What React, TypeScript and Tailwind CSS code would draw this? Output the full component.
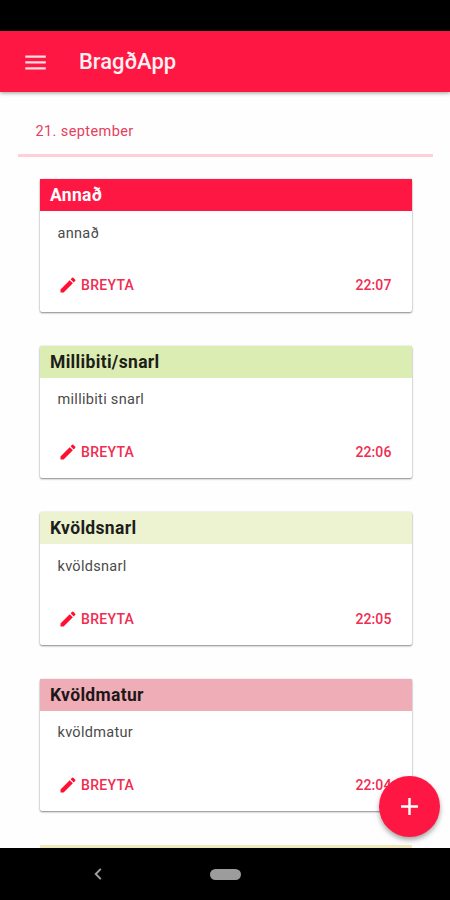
import { MdAdd, MdEdit } from "react-icons/md"

const meals = [
  { title: "Annað", text: "annað", time: "22:07", header: "bg-[#ff1744] text-white" },
  { title: "Millibiti/snarl", text: "millibiti snarl", time: "22:06", header: "bg-[#dcedb3] text-[#1c1e17]" },
  { title: "Kvöldsnarl", text: "kvöldsnarl", time: "22:05", header: "bg-[#edf2d0] text-[#1c1e1a]" },
  { title: "Kvöldmatur", text: "kvöldmatur", time: "22:04", header: "bg-[#efadb7] text-[#1e1718]" },
]

type Meal = (typeof meals)[number]

function MealCard({ meal }: { meal: Meal }) {
  return (
    <div className="h-[132.6px] shrink-0 flex flex-col rounded-[2px] bg-white shadow-[0_1px_2px_rgba(0,0,0,0.45),0_0_2px_rgba(0,0,0,0.12)]">
      <div className={`h-[32px] shrink-0 px-[10px] flex items-center text-[17.5px] font-bold tracking-[0.33px] ${meal.header}`}>
        <p className="leading-[20px]">{meal.title}</p>
      </div>
      <p className="mt-[12.6px] ml-[17.5px] text-[14.5px] leading-[20px] tracking-[0.3px] text-[#4a4a4a]">{meal.text}</p>
      <div className="mt-[31.8px] pl-[17.5px] pr-[20.5px] flex items-center justify-between text-[14px] leading-[20px] font-medium text-[#f02c50]">
        <button className="flex items-center gap-[3.5px] tracking-[0.3px]">
          <MdEdit className="w-[20px] h-[20px] text-[#ff0f30]" />
          BREYTA
        </button>
        <p className="tracking-[0.1px]">{meal.time}</p>
      </div>
    </div>
  )
}

export default function App() {
  return (
    <div className="relative w-[450px] h-[900px] flex flex-col overflow-hidden bg-white font-[Roboto,sans-serif]">
      <div className="h-[31px] shrink-0 bg-black" />
      <header className="z-10 h-[61px] shrink-0 pl-[25px] flex items-center bg-[#ff1744] shadow-[0_1px_4px_rgba(0,0,0,0.4)]">
        <svg className="mt-px w-[21px] h-[15px] fill-[#ffdce1]" viewBox="0 0 21 15">
          <path d="M.3 .4h20.5v2.3H.3zM.3 6.3h20.5v2.3H.3zM.3 12.2h20.5v2.3H.3z" />
        </svg>
        <h1 className="ml-[33px] mt-px text-[22px] leading-[28px] font-medium tracking-[-0.05px] text-[#fff0f2]">BragðApp</h1>
      </header>

      <main className="flex-1 min-h-0 overflow-hidden bg-[#fefefe]">
        <div className="h-[65px] ml-[18px] mr-[17px] pl-[17.5px] pt-[30px] border-b-[3px] border-[#ffd0d7]">
          <p className="text-[14.5px] leading-[20px] tracking-[0.4px] text-[#e5405d]">21. september</p>
        </div>
        <div className="mt-[22px] ml-[40px] mr-[38px] flex flex-col gap-[34px]">
          {meals.map((meal) => (
            <MealCard key={meal.title} meal={meal} />
          ))}
          <div className="h-[32px] bg-[#efe8b8]" />
        </div>
      </main>

      <button className="absolute left-[379px] top-[776px] w-[61px] h-[61px] flex items-center justify-center rounded-full bg-[#ff1744] text-white shadow-[0_3px_5px_rgba(0,0,0,0.35)]">
        <MdAdd className="w-[29px] h-[29px]" />
      </button>

      <nav className="h-[52px] shrink-0 pl-[94px] flex items-center bg-black">
        <svg className="w-[8px] h-[12px] fill-none stroke-[#a0a0a0]" viewBox="0 0 8 12" strokeWidth="1.9">
          <path d="M6.8 .8 1.7 6l5.1 5.2" />
        </svg>
        <div className="ml-[108px] w-[31px] h-[11px] rounded-full bg-[#9c9c9c]" />
      </nav>
    </div>
  )
}
